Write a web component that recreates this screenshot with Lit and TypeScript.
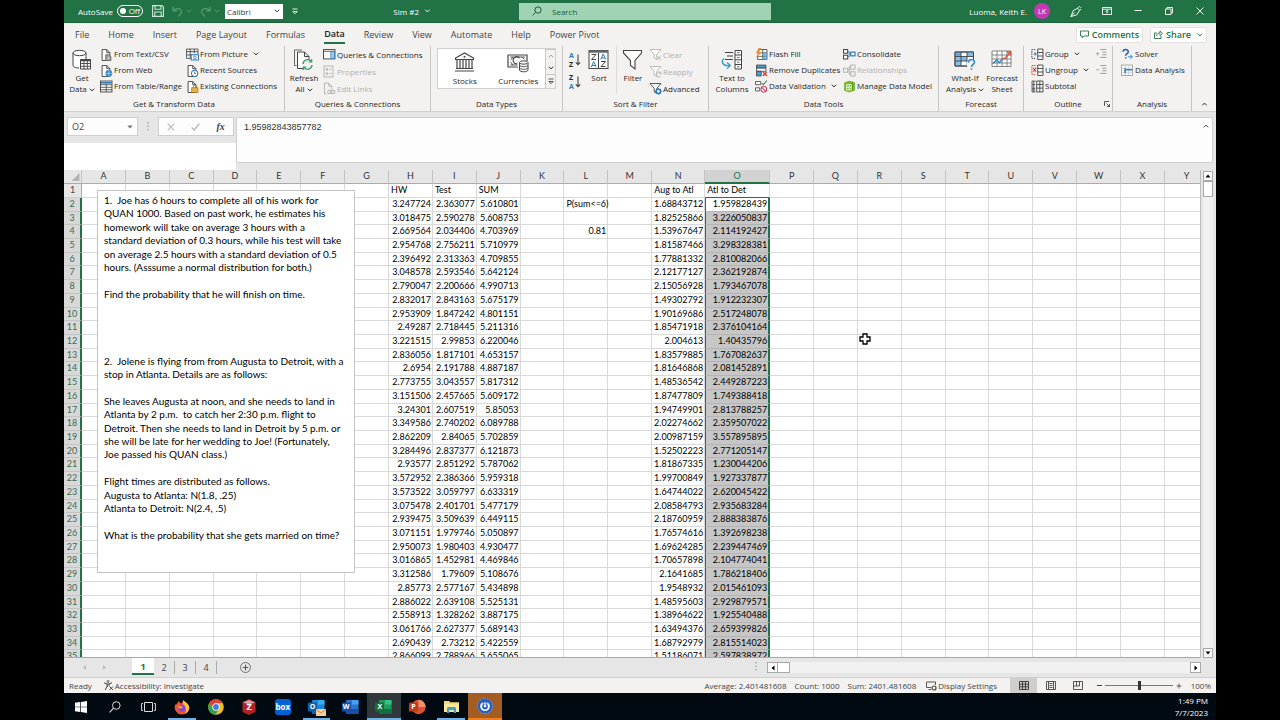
import { LitElement, html, css, svg, nothing } from "lit";
import { customElement } from "lit/decorators.js";
import { classMap } from "lit/directives/class-map.js";

const K = "#444";
const B = "#2b7cbc";
const G = "#b5b3b1";

const chevron = (w = 6) => html`<svg class="chev" width=${w} height="4" viewBox="0 0 6 4" aria-hidden="true">
  <path d="M.8.7 3 2.9 5.2.7" fill="none" stroke="currentColor" stroke-width="1" />
</svg>`;

const page = (c: string) => svg`<path d="M2 1.5h4.500l3 3V12H2z" fill="#fff" stroke=${c} stroke-width=".9"/><path d="M6.500 1.500v3h3" fill="none" stroke=${c} stroke-width=".9"/>`;

const funnel = (c: string) => svg`<path d="M1 1.500h10.500L7.500 6v5L5 9.500V6z" fill="#fff" stroke=${c} stroke-width=".9"/>`;

const small: Record<string, unknown> = {
  csv: svg`${page(K)}<path d="M5.500 6.500h3l2 1.700v4h-5z" fill="#999" stroke="#666" stroke-width=".8"/><path d="M7 9h2M7 10.500h2" stroke="#fff" stroke-width=".6"/>`,
  web: svg`${page(K)}<circle cx="8.500" cy="9" r="3.300" fill="#2b88c8"/><path d="M5.500 9h6M8.500 6v6" stroke="#cfe7f7" stroke-width=".6"/>`,
  table: svg`<rect x=".5" y="1" width="11" height="10.500" fill="#fff" stroke=${K} stroke-width=".9"/><path d="M1 2.700h10" stroke=${B} stroke-width="1.600"/><path d="M.5 4.500h11M.5 7h11M.5 9.300h11M6 4v7.500" stroke=${K} stroke-width=".8"/>`,
  picture: svg`<path d="M.5 1h11v8M.5 1v9h5M.5 3.500h11M.5 6.700h6M4 1v9M8 1v4" fill="none" stroke=${K} stroke-width=".8"/><rect x="5" y="6.500" width="7" height="5" fill="#fff" stroke=${B} stroke-width="1"/><circle cx="8.500" cy="9" r="1.300" fill="none" stroke=${B} stroke-width=".8"/>`,
  recent: svg`${page(K)}<circle cx="8.300" cy="9" r="3" fill="#fff" stroke=${B} stroke-width="1"/><path d="M8.300 7.200V9.200h1.500" fill="none" stroke=${K} stroke-width=".7"/>`,
  existing: svg`${page(K)}<rect x="5.500" y="7.500" width="6" height="4.500" fill="#e9b34a" stroke="#a3701a" stroke-width=".7"/><path d="M7 7.500V6.500a1.500 1.500 0 0 1 3 0v1" fill="none" stroke="#a3701a" stroke-width=".8"/>`,
  queries: svg`<rect x=".5" y="1.500" width="11" height="9" fill="#fff" stroke=${K} stroke-width=".9"/><path d="M.5 3.200h11" stroke=${K} stroke-width=".8"/><rect x="7.500" y="3.500" width="3.500" height="6.700" fill="#9cc8e8" stroke=${B} stroke-width=".7"/>`,
  props: svg`<rect x="1" y="1" width="8.500" height="10.500" fill="none" stroke=${G} stroke-width=".9"/><path d="M3 3.500h1.500v1.500H3zM3 7.500h1.500V9H3zM6 4.200h2M6 8.200h2" fill="none" stroke=${G} stroke-width=".9"/>`,
  links: svg`<path d="M1.500 1h4l3 3v3M1.500 1v10.500h2M5.500 1v3h3" fill="none" stroke=${G} stroke-width=".9"/><rect x="4.500" y="8" width="4" height="3" rx="1.500" fill="none" stroke=${G}/><rect x="7.500" y="8" width="4" height="3" rx="1.500" fill="none" stroke=${G}/>`,
  clear: svg`${funnel(G)}<path d="m7.500 7.500 4 4m0-4-4 4" stroke=${G} stroke-width=".9"/>`,
  reapply: svg`${funnel(G)}<path d="M11.500 8a2.500 2.500 0 1 0 0 2.500M11.500 6.500V8.300H9.700" fill="none" stroke=${G} stroke-width=".9"/>`,
  advanced: svg`${funnel(K)}<circle cx="9" cy="9" r="2.100" fill="#fff" stroke=${B} stroke-width="1.500"/><path d="M9 5.800v1M9 11.200v1M5.800 9h1M11.200 9h1M6.700 6.700l.8.800M10.500 10.500l.8.800M11.300 6.700l-.8.800M7.500 10.500l-.8.800" stroke=${B} stroke-width="1"/>`,
  flash: svg`<path d="M4.500 1.500h7v9.500h-9V7" fill="#fff" stroke=${K} stroke-width=".8"/><path d="M7.500 1.500V11M4 4.700h7.500M3 8h8.500" stroke=${K} stroke-width=".8"/><path d="M7.500 4.700h4V11h-4z" fill="#58a5db" opacity=".75"/><path d="M3.500 0 .8 5h2L1 9.500 6 4H3.800L6 0z" fill="#e8892b"/>`,
  dup: svg`<path d="M1.500 1h9v3h-9z" fill="#4b9bd4" stroke=${K} stroke-width=".8"/><path d="M1.500 4h9v3h-9z" fill="#fff" stroke=${K} stroke-width=".8"/><path d="M1.500 7h4.500v4.500H1.500z" fill="#4b9bd4" stroke=${K} stroke-width=".8"/><path d="m7.500 7.500 4 4m0-4-4 4" stroke="#d13b2e" stroke-width="1.200"/>`,
  valid: svg`<path d="M.5 1.500h5v3h-5zM.5 7.500h4v3h-4z" fill="#fff" stroke=${K} stroke-width=".8"/><path d="m6.500 3 1.500 1.500 3.500-4" fill="none" stroke="#3c8a53" stroke-width="1"/><circle cx="8.500" cy="9" r="2.700" fill="#fff" stroke="#d13b5e" stroke-width="1"/><path d="m6.600 7.200 3.800 3.700" stroke="#d13b5e" stroke-width="1"/>`,
  consol: svg`<path d="M.5 1.500h4v3.500h-4zM.5 7h4v3.500h-4z" fill="#fff" stroke=${K} stroke-width="1"/><rect x="7.500" y="4" width="4" height="3.500" fill="#fff" stroke=${B} stroke-width="1.200"/><path d="M4.500 3.500h1.500v5H4.500M6 5.700h1.500" fill="none" stroke=${B} stroke-width=".8"/>`,
  relations: svg`<path d="M.5 4h4v4h-4zM7.500 1h4v4h-4zM7.500 7.500h4v4h-4zM4.500 6H6V3h1.500M6 6v3.500h1.500" fill="none" stroke=${G} stroke-width="1"/>`,
  model: svg`<path d="m1 2.500 5-1.800 5.500 1.800v7.500L6 12 1 10z" fill="#76b82a"/><path d="M3.500 4.500h5v5h-5zM3.500 7h5M6 4.500v5" fill="none" stroke="#fff" stroke-width=".8"/><path d="M9 1.500v9" stroke="#4d8a12" stroke-width=".8"/>`,
  group: svg`<path d="M4 1.500H.8v8.500H4" fill="none" stroke=${K} stroke-width=".9" stroke-dasharray="1.500 .8"/><path d="M2.500 5.700h3M4 4.200v3" stroke=${B} stroke-width="1"/><path d="M6.500 1h5v10h-5zM6.500 4.300h5M6.500 7.700h5" fill="#fff" stroke=${K} stroke-width=".9"/>`,
  ungroup: svg`<path d="M4.500 1.500H.8v8.500h3.700" fill="none" stroke="#d13b2e" stroke-width=".9" stroke-dasharray="1.500 .8"/><path d="m2 7.500 3-4M2 3.700l3 3.800" stroke="#d13b2e" stroke-width="1"/><path d="M6.500 1h5v10h-5zM6.500 4.300h5M6.500 7.700h5" fill="#fff" stroke=${K} stroke-width=".9"/>`,
  subtotal: svg`<path d="M4.500 1H1v10.500h3.500M1 4.500h3M1 8h3M2.700 1v10.500" fill="none" stroke=${K} stroke-width=".8"/><path d="M5.500 1h6v10.500h-6zM5.500 4.300h6M5.500 7.800h6M8.500 1v10.500" fill="#fff" stroke=${K} stroke-width=".9"/><path d="M1 9.500h3" stroke=${B}/>`,
  solver: svg`<path d="M2 3.700C2 .7 7 .7 7 3.500 7 5.500 4.500 5.500 4.500 7.500M4.500 8.800v1.400" fill="none" stroke="#2b5fb0" stroke-width="1.500"/><path d="M6.500 8.500h4M9 6.800l1.800 1.700L9 10.200" fill="none" stroke="#4b9bd4" stroke-width="1"/>`,
  analysis: svg`<rect x=".5" y="1" width="10.500" height="10" fill="#fff" stroke="#999" stroke-width=".8"/><path d="M.5 4h10.500M.5 8h10.500M4 1v10M7.500 1v10" stroke="#b5c4d0" stroke-width=".7"/><path d="M4 4v5M4 5.500h7" stroke="#3d84b8" stroke-width="1.600"/>`,
  show: svg`<path d="M1 5.500h3M2.500 4v3" stroke="#999" stroke-width=".8"/><path d="M5 1.500h6M7 4h4M7 6.500h4M5 9h6" stroke="#999" stroke-width=".9"/>`,
  hide: svg`<path d="M1 5.500h3" stroke="#999" stroke-width=".8"/><path d="M5 1.500h6M7 4h4M7 6.500h4M5 9h6" stroke="#999" stroke-width=".9"/>`,
};

const big: Record<string, unknown> = {
  get: svg`<path d="M2 4v13c0 1.200 3 2 6.500 2L15 16V4z" fill="#fff"/><path d="M2 4v12.500C2 18 5 19 8 19M15 4v6" fill="none" stroke=${K}/><ellipse cx="8.500" cy="4" rx="6.500" ry="2.700" fill="#fff" stroke=${K}/><path d="M9.500 10.500h10v9.500h-10z" fill="#fff" stroke=${K}/><path d="M9.500 11.500h10" stroke=${K} stroke-width="1.500"/><path d="M9.500 14.500h10M9.500 17.300h10M13 11v9M16.300 11v9" stroke=${K} stroke-width=".9"/>`,
  refresh: svg`<path d="M3.500 16.500H1.500V1H9" fill="none" stroke="#666"/><path d="M4.500 3h7l4.500 4.500v12H4.500z" fill="#fff" stroke=${K}/><path d="M11.500 3v4.500H16" fill="none" stroke=${K}/><circle cx="14.500" cy="15.500" r="5.500" fill="#f3f2f1"/><path d="M10 15a4.500 4.500 0 0 1 8.300-2.200M19 16a4.500 4.500 0 0 1-8.300 2.200" fill="none" stroke="#3c9a63" stroke-width="1.300"/><path d="M18.700 10v3h-3M10.300 21v-3h3" fill="none" stroke="#3c9a63" stroke-width="1.200"/>`,
  sort: svg`<rect x="1" y="1.500" width="19" height="18" fill="#fff" stroke=${K}/><path d="M1 2.500h19" stroke="#666" stroke-width="2.500"/><path d="M10.500 4v15.500" stroke=${K}/><path d="M3.500 5.500H8l-4.500 5H8M13 12.500h4.500l-4.500 5h4.500" fill="none" stroke=${K}/><path d="m3.300 18 2.400-5.500L8.200 18M4 16.500h3.300M12.800 10.500l2.400-5.500 2.500 5.500M13.500 9h3.300" fill="none" stroke=${B}/>`,
  filter: svg`<path d="M1.500 1.500h18v2.500L13 11.500V20l-4.500-3.500v-5L1.500 4z" fill="#fff" stroke=${K} stroke-width="1.100"/>`,
  text: svg`<path d="M4 3.500h8M6 7h6M4 10.500h8" stroke=${K}/><path d="M14 1.500h6.500v18.500H14zM14 6h6.500M14 10.800h6.500M14 15.500h6.500" fill="#fff" stroke=${K}/><path d="M16 3.700h2.500M16 8.400h2.500M16 13.200h2.500M16 17.800h2.500" stroke=${K} stroke-width=".8"/><path d="M3.500 9.500c-4 2-2.500 8 5 7M6 13.500l3.300 3L6 19.500" fill="none" stroke="#2b9fc8" stroke-width="1.300"/>`,
  whatif: svg`<path d="M1 3h18.500v14H1z" fill="#fff" stroke=${K}/><path d="M1 3h6v4.500H1zM7 7.500h6V12H7zM13 3h6.500v4.500H13z" fill="#7fb9e6"/><path d="M1 3h6v14H1z" fill="#5ba3dc" opacity=".7"/><path d="M1 7.500h18.500M1 12h18.500M7 3v14M13 3v14M1 3h18.500v14H1z" fill="none" stroke=${K} stroke-width=".9"/><circle cx="17.500" cy="15" r="5" fill="#f3f2f1"/><path d="M14.500 13.500c0-4 6-4 6-.5 0 2.500-3 2.200-3 5M17.500 19.200v1.600" fill="none" stroke="#2b8cc8" stroke-width="1.600"/>`,
  forecast: svg`<path d="M1 2h19v15.500H1zM1 6h19M1 10h19M1 14h19M6 2v15.500M11 2v15.500M16 2v15.500" fill="#fff" stroke="#777" stroke-width=".9"/><path d="M2 14.500 5.500 11l3 2.500 3.500-4" fill="none" stroke="#2b8cc8" stroke-width="1.500"/><path d="m11.500 9.500 2.500 0 5-6M16 3h3.500v3.500" fill="none" stroke="#d8503f" stroke-width="1.400"/>`,
  stocks: svg`<path d="M1.500 7.500V6L10.500 1l9 5v1.500zM3 8v8M6 8v8M9 8v8M12 8v8M15 8v8M18 8v8M2 16.500h17M1 19h19" fill="none" stroke=${K} stroke-width="1.200"/><circle cx="10.500" cy="4.800" r="1" fill=${K}/>`,
  currency: svg`<path d="M1 3h19v6M1 3v12h10" fill="none" stroke=${K} stroke-width="1.200"/><path d="M3.500 7.500a2.500 2.500 0 0 0 2-2.500M17.500 7a2.500 2.500 0 0 1-2-2M3.500 10.500a2.500 2.500 0 0 1 2 2.500M3.300 5h14.500M3.300 13h7" fill="none" stroke=${K} stroke-width=".9"/><path d="M12.500 6.200a3.500 3.500 0 1 0-2 5.500" fill="none" stroke=${K} stroke-width="1.100"/><path d="M12.500 10.500v7.500c0 1 2 1.800 4.200 1.800S21 19 21 18v-7.500" fill="#fff" stroke=${K}/><ellipse cx="16.700" cy="10.500" rx="4.200" ry="1.700" fill="#fff" stroke=${K}/><path d="M12.500 13c0 1 2 1.700 4.200 1.700S21 14 21 13M12.500 15.600c0 1 2 1.700 4.200 1.700s4.300-.7 4.300-1.700" fill="none" stroke=${K} stroke-width=".9"/>`,
};

const sIcon = (n: string) => html`<svg class="ico" width="13" height="13" viewBox="0 0 12.500 12.500" aria-hidden="true">${small[n]}</svg>`;
const bIcon = (n: string) => html`<svg class="ico" width="22" height="22" viewBox="0 0 22 22" aria-hidden="true">${big[n]}</svg>`;

const item = (icon: string, label: string, o: { off?: boolean; drop?: boolean } = {}) => html`
  <button class="item" ?disabled=${!!o.off}>${sIcon(icon)}<span>${label}</span>${o.drop ? chevron() : nothing}</button>`;
const bigBtn = (icon: string, l1: string, l2 = "", drop = false) => html`
  <button class="big">${bIcon(icon)}<span>${l1}</span>${l2 ? html`<span>${l2}${drop ? chevron() : nothing}</span>` : nothing}</button>`;

const azIcon = (top: string, bottom: string, topBlue: boolean) => html`
  <button class="az" aria-label="Sort ${top} to ${bottom}">
    <span class="letters"><b class=${classMap({ blue: topBlue })}>${top}</b><b class=${classMap({ blue: !topBlue })}>${bottom}</b></span>
    <svg width="6" height="12" viewBox="0 0 6 12" aria-hidden="true"><path d="M3 .5v10M.8 8.300 3 10.700l2.200-2.400" fill="none" stroke="#444" stroke-width="1.100" /></svg>
  </button>`;

@customElement("excel-title-bar")
class TitleBar extends LitElement {
  static styles = css`
    :host { display: grid; grid-template-columns: 455fr 252fr 445fr; align-items: center; height: 23px; background: #217346; color: #fff; font-size: 8px; border-bottom: 1px solid #1a6139; box-sizing: border-box; }
    button { all: unset; display: flex; align-items: center; justify-content: center; }
    .left, .right { display: flex; align-items: center; }
    .left { padding-left: 14px; }
    .toggle { box-sizing: border-box; width: 26px; height: 12px; border: 1px solid #fff; border-radius: 6px; gap: 3px; margin: 0 9px 0 4px; line-height: 10px; }
    .knob { width: 6px; height: 6px; border-radius: 50%; background: #fff; }
    .dim { color: #5d9a78; gap: 3px; margin-left: 8px; }
    select { appearance: none; box-sizing: border-box; width: 58px; height: 15px; border: 0; border-radius: 0; padding: 0 2px; margin: 0; background: #fff; color: #333; font: 8px "Open Sans", sans-serif; }
    .font { display: flex; align-items: center; margin-left: 5px; }
    .font svg { margin-left: -9px; color: #333; pointer-events: none; }
    .more { margin-left: 12px; }
    .doc { gap: 5px; margin: 0 88px 0 auto; }
    .search { display: flex; align-items: center; height: 17px; background: #9fd3b3; color: #185c37; padding-left: 13px; gap: 10px; }
    input { all: unset; flex: 1; min-width: 0; font: 8px "Open Sans", sans-serif; color: #185c37; }
    input::placeholder { color: #185c37; opacity: 1; }
    .right { justify-content: flex-end; padding-right: 10px; }
    .avatar { width: 16px; height: 16px; border-radius: 50%; background: #c239b3; font-size: 7px; margin: 0 20px 0 7px; }
    .win { width: 12px; margin-left: 19px; }
    .pen { margin: 0; width: 12px; }
  `;
  render() {
    return html`
      <div class="left">
        <span>AutoSave</span>
        <button class="toggle" role="switch" aria-checked="false" aria-label="AutoSave"><i class="knob"></i>Off</button>
        <button aria-label="Save"><svg width="12" height="12" viewBox="0 0 12 12"><path d="M.6.600h9.300l1.500 1.500v9.300H.6zM3 .600v3.600h6V.600M2.800 11.400V7h6.400v4.400" fill="none" stroke="#cfe5d8" stroke-width="1.100" /></svg></button>
        <button class="dim" aria-label="Undo"><svg width="11" height="11" viewBox="0 0 11 11"><path d="M1 .8v4h4M1.200 4.600C4 1.500 10 2 9.300 6.300 9 8 7.500 9 6 10.500" fill="none" stroke="currentColor" stroke-width="1.200" /></svg>${chevron()}</button>
        <button class="dim" aria-label="Redo"><svg width="11" height="11" viewBox="0 0 11 11"><path d="M10 .8v4H6M9.800 4.600C7 1.500 1 2 1.700 6.300 2 8 3.500 9 5 10.500" fill="none" stroke="currentColor" stroke-width="1.200" /></svg>${chevron()}</button>
        <span class="font"><select aria-label="Font"><option>Calibri</option></select>${chevron()}</span>
        <button class="more" aria-label="Customize toolbar"><svg width="6" height="7" viewBox="0 0 6 7"><path d="M.5 1h5M.8 3.500 3 5.700l2.200-2.200z" fill="none" stroke="#fff" stroke-width=".9" /></svg></button>
        <button class="doc">Sim #2 ${chevron(7)}</button>
      </div>
      <label class="search">
        <svg width="10" height="10" viewBox="0 0 10 10" aria-hidden="true"><circle cx="6" cy="4" r="3.200" fill="none" stroke="currentColor" /><path d="M3.700 6.300.6 9.400" stroke="currentColor" /></svg>
        <input aria-label="Search" placeholder="Search" />
      </label>
      <div class="right">
        <span>Luoma, Keith E.</span>
        <button class="avatar" aria-label="Account">LK</button>
        <button class="win pen" aria-label="Pen"><svg width="13" height="13" viewBox="0 0 13 13"><path d="M1 12 3.500 5.500 8.300 3l2 2.200L7.500 10zM1 12l4-4.300M8.300 3l1.200-1.500M10.300 5.200 12 4M10 .600l.4 1M12.300 1.800l-1 .5" fill="none" stroke="#fff" stroke-width="1" /></svg></button>
        <button class="win" aria-label="Ribbon display options"><svg width="10" height="8" viewBox="0 0 10 8"><path d="M.5.500h9v7h-9zM.5 2.200h9M5 6.500v-3M3.500 4.700 5 3.300l1.500 1.400" fill="none" stroke="#fff" stroke-width=".9" /></svg></button>
        <button class="win" aria-label="Minimize"><svg width="8" height="8" viewBox="0 0 8 8"><path d="M.5 3.500h7" stroke="#fff" /></svg></button>
        <button class="win" aria-label="Restore"><svg width="8" height="8" viewBox="0 0 8 8"><path d="M.5 2h5.500v5.500H.5zM2 2V.500h5.500V6H6" fill="none" stroke="#fff" stroke-width=".9" /></svg></button>
        <button class="win" aria-label="Close"><svg width="8" height="8" viewBox="0 0 8 8"><path d="m.5.500 7 7m0-7-7 7" stroke="#fff" stroke-width=".9" /></svg></button>
      </div>`;
  }
}

@customElement("excel-ribbon")
class Ribbon extends LitElement {
  static styles = css`
    :host { display: block; background: #f3f2f1; color: #262626; font-size: 8px; line-height: 12px; }
    button { all: unset; box-sizing: border-box; white-space: nowrap; }
    button:disabled { color: #b1afad; }
    .tabs { display: flex; align-items: center; height: 23px; padding: 0 9px 0 11px; font-size: 9px; }
    .tab { height: 19px; line-height: 18px; margin-right: 19px; color: #444; }
    .active { font-weight: 600; color: #222; border-bottom: 2px solid #217346; }
    .actions { display: flex; gap: 7px; margin-left: auto; }
    .action { display: flex; align-items: center; gap: 3px; height: 16px; padding: 0 3px; background: #fff; border: 1px solid #e3e1df; border-radius: 2px; color: #217346; font-weight: 600; }
    .share .chev { margin-left: 3px; }
    .groups { display: grid; grid-template-columns: 221fr 146fr 132fr 146fr 230fr 85fr 89fr 79fr 24fr; height: 64px; padding-bottom: 1px; }
    .group { display: grid; grid-template-rows: 1fr 14px; border-right: 1px solid #c8c6c4; min-width: 0; margin-bottom: 2px; }
    .end { display: flex; align-items: flex-end; justify-content: center; padding-bottom: 2px; }
    .name { text-align: center; position: relative; line-height: 14px; }
    .launch { position: absolute; right: 2px; top: 4px; display: flex; }
    .body { display: grid; align-content: start; min-width: 0; }
    .get { grid-template-columns: 36px 86px 1fr; }
    .query { grid-template-columns: 38px 1fr; }
    .sortf { grid-template-columns: 24px 24px 38px 1fr; }
    .tools { grid-template-columns: 46px 88px 1fr; }
    .cast { grid-template-columns: 1fr 1fr; padding: 0 3px 0 7px; }
    .outline { grid-template-columns: 1fr 17px; padding-left: 7px; }
    .solve { padding-left: 8px; }
    .stack { display: grid; grid-auto-rows: 16px; align-content: start; }
    .roomy { grid-auto-rows: 17px; }
    .item { display: flex; align-items: center; gap: 1px; }
    .ico { flex: none; }
    .item .chev { margin-left: 4px; }
    .big { display: flex; flex-direction: column; align-items: center; line-height: 11px; padding-top: 3px; }
    .big .ico { margin-bottom: 1px; }
    .big .chev { margin-left: 2px; }
    .az { display: flex; align-items: center; justify-content: center; gap: 1px; height: 22px; }
    .letters { display: grid; font-size: 7px; line-height: 9px; }
    .blue { color: #2b7cbc; }
    .azs { padding-top: 3px; display: grid; align-content: start; }
    .filter { display: grid; align-content: start; border-left: 1px solid #dddbd9; margin-left: 5px; height: 48px; }
    .gallery { display: grid; grid-template-columns: 1fr 1fr 10px; height: 41px; margin: 2px 6px 0; background: #fff; border: 1px solid #d2d0ce; box-sizing: border-box; }
    .kind { display: flex; flex-direction: column; align-items: center; padding-top: 3px; }
    .kind .ico { margin-bottom: 1px; }
    .scroll { display: grid; grid-template-rows: repeat(3, 1fr); border-left: 1px solid #c8c6c4; }
    .scroll button { display: grid; place-items: center; background: #f3f2f1; border-bottom: 1px solid #c8c6c4; }
    .scroll button:last-child { border-bottom: 0; }
    .up { transform: scaleY(-1); }
    .scroll .up { color: #999; }
  `;
  render() {
    const tabs = ["File", "Home", "Insert", "Page Layout", "Formulas", "Data", "Review", "View", "Automate", "Help", "Power Pivot"];
    return html`
      <nav class="tabs">
        ${tabs.map((t) => html`<button class=${classMap({ tab: true, active: t === "Data" })}>${t}</button>`)}
        <div class="actions">
          <button class="action"><svg width="9" height="9" viewBox="0 0 9 9" aria-hidden="true"><path d="M.5 1h8v5H4L2.200 8V6H.5z" fill="none" stroke="currentColor" stroke-width=".9" /></svg>Comments</button>
          <button class="action share"><svg width="9" height="9" viewBox="0 0 9 9" aria-hidden="true"><path d="M3 3H.5v5.500H7V6M2.500 6C3 3.500 4.500 3 6 3V1l2.500 2.500L6 5.500V4" fill="none" stroke="currentColor" stroke-width=".9" /></svg>Share ${chevron()}</button>
        </div>
      </nav>
      <div class="groups">
        <section class="group"><div class="body get">
          ${bigBtn("get", "Get", "Data", true)}
          <div class="stack">${item("csv", "From Text/CSV")}${item("web", "From Web")}${item("table", "From Table/Range")}</div>
          <div class="stack">${item("picture", "From Picture", { drop: true })}${item("recent", "Recent Sources")}${item("existing", "Existing Connections")}</div>
        </div><div class="name">Get &amp; Transform Data</div></section>
        <section class="group"><div class="body query">
          ${bigBtn("refresh", "Refresh", "All", true)}
          <div class="stack roomy">${item("queries", "Queries & Connections")}${item("props", "Properties", { off: true })}${item("links", "Edit Links", { off: true })}</div>
        </div><div class="name">Queries &amp; Connections</div></section>
        <section class="group"><div class="gallery">
          <button class="kind">${bIcon("stocks")}<span>Stocks</span></button>
          <button class="kind">${bIcon("currency")}<span>Currencies</span></button>
          <div class="scroll"><button class="up" aria-label="Previous">${chevron()}</button><button aria-label="Next">${chevron()}</button>
            <button aria-label="More types"><svg width="6" height="7" viewBox="0 0 6 7"><path d="M.5 1h5M.8 3.500 3 5.700l2.200-2.200z" fill="none" stroke="#444" stroke-width=".9" /></svg></button></div>
        </div><div class="name">Data Types</div></section>
        <section class="group"><div class="body sortf">
          <div class="azs">${azIcon("A", "Z", true)}${azIcon("Z", "A", false)}</div>
          ${bigBtn("sort", "Sort")}
          <div class="filter">${bigBtn("filter", "Filter")}</div>
          <div class="stack roomy">${item("clear", "Clear", { off: true })}${item("reapply", "Reapply", { off: true })}${item("advanced", "Advanced")}</div>
        </div><div class="name">Sort &amp; Filter</div></section>
        <section class="group"><div class="body tools">
          ${bigBtn("text", "Text to", "Columns")}
          <div class="stack">${item("flash", "Flash Fill")}${item("dup", "Remove Duplicates")}${item("valid", "Data Validation", { drop: true })}</div>
          <div class="stack">${item("consol", "Consolidate")}${item("relations", "Relationships", { off: true })}${item("model", "Manage Data Model")}</div>
        </div><div class="name">Data Tools</div></section>
        <section class="group"><div class="body cast">
          ${bigBtn("whatif", "What-If", "Analysis", true)}${bigBtn("forecast", "Forecast", "Sheet")}
        </div><div class="name">Forecast</div></section>
        <section class="group"><div class="body outline">
          <div class="stack">${item("group", "Group", { drop: true })}${item("ungroup", "Ungroup", { drop: true })}${item("subtotal", "Subtotal")}</div>
          <div class="stack"><button class="item" aria-label="Show detail">${sIcon("show")}</button><button class="item" aria-label="Hide detail">${sIcon("hide")}</button></div>
        </div><div class="name">Outline<button class="launch" aria-label="Outline settings"><svg width="6" height="6" viewBox="0 0 6 6"><path d="M.5 5V.500H5M2.500 2.500l3 3M5.500 3v2.500H3" fill="none" stroke="#444" stroke-width=".9" /></svg></button></div></section>
        <section class="group"><div class="body solve">
          <div class="stack">${item("solver", "Solver")}${item("analysis", "Data Analysis")}</div>
        </div><div class="name">Analysis</div></section>
        <div class="end"><button class="up" aria-label="Collapse ribbon">${chevron(7)}</button></div>
      </div>`;
  }
}

@customElement("excel-formula-bar")
class FormulaBar extends LitElement {
  static styles = css`
    :host { display: grid; grid-template-columns: 172px 1fr; height: 59px; background: #e6e6e6; border-top: 1px solid #d2d0ce; box-sizing: border-box; font-size: 8px; color: #444; }
    button { all: unset; display: grid; place-items: center; }
    .left { display: grid; grid-template-rows: 31px 1fr; }
    .row { display: flex; align-items: center; padding: 0 2px 2px 3px; }
    .blank { background: #fff; }
    .box { display: flex; align-items: center; box-sizing: border-box; height: 19px; border: 1px solid #cfcfcf; background: #fdfdfd; }
    .cell { width: 71px; padding: 0 4px; }
    .cell input { all: unset; flex: 1; min-width: 0; font: 9px "Open Sans", sans-serif; }
    .dots { width: 20px; display: grid; place-items: center; }
    .fns { flex: 1; display: grid; grid-template-columns: repeat(3, 1fr); }
    .formula { display: flex; align-items: flex-start; margin: 5px 3px 7px 0; border: 1px solid #cfcfcf; background: #fdfdfd; padding: 2px 3px 0 7px; }
    textarea { all: unset; flex: 1; height: 36px; font: 9px/14px "Liberation Sans", sans-serif; color: #333; }
    .up { transform: scaleY(-1); padding: 4px 0; }
    .fx { font: italic bold 10px "Liberation Serif", serif; }
  `;
  render() {
    return html`
      <div class="left">
        <div class="row">
          <div class="box cell"><input aria-label="Name box" value="O2" /><svg width="6" height="4" viewBox="0 0 6 4" aria-hidden="true"><path d="M.3.500h5.400L3 3.500z" fill="#777" /></svg></div>
          <span class="dots"><svg width="2" height="9" viewBox="0 0 2 9"><path d="M1 0v9" stroke="#aaa" stroke-width="1.500" stroke-dasharray="1.500 2" /></svg></span>
          <div class="box fns">
            <button aria-label="Cancel"><svg width="8" height="8" viewBox="0 0 8 8"><path d="m.7.700 6.600 6.600m0-6.600L.7 7.300" stroke="#bbb" stroke-width="1.200" /></svg></button>
            <button aria-label="Enter"><svg width="9" height="8" viewBox="0 0 9 8"><path d="m.7 4.500 2.500 2.500L8.300.700" fill="none" stroke="#bbb" stroke-width="1.400" /></svg></button>
            <button class="fx" aria-label="Insert function">fx</button>
          </div>
        </div>
        <div class="blank"></div>
      </div>
      <div class="formula"><textarea aria-label="Formula" .value=${"1.95982843857782"}></textarea><button class="up" aria-label="Collapse formula bar">${chevron()}</button></div>`;
  }
}

const COLS = "ABCDEFGHIJKLMNOPQRSTUVWXY".split("");
const DATA = `3.247724 2.363077 5.610801 1.68843712 1.959828439
3.018475 2.590278 5.608753 1.82525866 3.226050837
2.669564 2.034406 4.703969 1.53967647 2.114192427
2.954768 2.756211 5.710979 1.81587466 3.298328381
2.396492 2.313363 4.709855 1.77881332 2.810082066
3.048578 2.593546 5.642124 2.12177127 2.362192874
2.790047 2.200666 4.990713 2.15056928 1.793467078
2.832017 2.843163 5.675179 1.49302792 1.912232307
2.953909 1.847242 4.801151 1.90169686 2.517248078
2.49287 2.718445 5.211316 1.85471918 2.376104164
3.221515 2.99853 6.220046 2.004613 1.40435796
2.836056 1.817101 4.653157 1.83579885 1.767082637
2.6954 2.191788 4.887187 1.81646868 2.081452891
2.773755 3.043557 5.817312 1.48536542 2.449287223
3.151506 2.457665 5.609172 1.87477809 1.749388418
3.24301 2.607519 5.85053 1.94749901 2.813788257
3.349586 2.740202 6.089788 2.02274662 2.359507022
2.862209 2.84065 5.702859 2.00987159 3.557895895
3.284496 2.837377 6.121873 1.52502223 2.771205147
2.93577 2.851292 5.787062 1.81867335 1.230044206
3.572952 2.386366 5.959318 1.99700849 1.927337877
3.573522 3.059797 6.633319 1.64744022 2.620045422
3.075478 2.401701 5.477179 2.08584793 2.935683284
2.939475 3.509639 6.449115 2.18760959 2.888383876
3.071151 1.979746 5.050897 1.76574616 1.392698238
2.950073 1.980403 4.930477 1.69624285 2.239447469
3.016865 1.452981 4.469846 1.70657898 2.104774041
3.312586 1.79609 5.108676 2.1641685 1.786218406
2.85773 2.577167 5.434898 1.9548932 2.015461093
2.886022 2.639108 5.525131 1.48595603 2.929879571
2.558913 1.328262 3.887175 1.38964622 1.925540488
3.061766 2.627377 5.689143 1.63494376 2.659399826
2.690439 2.73212 5.422559 1.68792979 2.815514023
2.866099 2.788966 5.655065 1.51186071 2.597838972`.split("\n").map((l) => l.split(" "));
const DATA_COLS = ["H", "I", "J", "N", "O"];

function cellValue(col: string, row: number): string {
  if (row === 1) return ({ H: "HW", I: "Test", J: "SUM", N: "Aug to Atl", O: "Atl to Det" } as Record<string, string>)[col] ?? "";
  if (col === "L") return row === 2 ? "P(sum<=6)" : row === 4 ? "0.81" : "";
  const k = DATA_COLS.indexOf(col);
  return k < 0 ? "" : DATA[row - 2][k];
}

const NOTE = `1.  Joe has 6 hours to complete all of his work for
QUAN 1000. Based on past work, he estimates his
homework will take on average 3 hours with a
standard deviation of 0.3 hours, while his test will take
on average 2.5 hours with a standard deviation of 0.5
hours. (Asssume a normal distribution for both.)

Find the probability that he will finish on time.




2.  Jolene is flying from from Augusta to Detroit, with a
stop in Atlanta. Details are as follows:

She leaves Augusta at noon, and she needs to land in
Atlanta by 2 p.m.  to catch her 2:30 p.m. flight to
Detroit. Then she needs to land in Detroit by 5 p.m. or
she will be late for her wedding to Joe! (Fortunately,
Joe passed his QUAN class.)

Flight times are distributed as follows.
Augusta to Atlanta: N(1.8, .25)
Atlanta to Detroit: N(2.4, .5)

What is the probability that she gets married on time?`;

@customElement("excel-sheet")
class Sheet extends LitElement {
  static styles = css`
    :host { display: grid; grid-template-columns: 1fr 15px; min-height: 0; flex: 1; background: #e6e6e6; font-family: Lato, sans-serif; }
    .view { position: relative; overflow: hidden; border-right: 1px solid #bdbdbd; border-bottom: 1px solid #a8a8a8; background: #fff; }
    table { table-layout: fixed; width: calc(100% + 9px); border-collapse: separate; border-spacing: 0; font-size: 9px; line-height: 12px; color: #000; }
    .c-head { width: 18px; }
    .c-n { width: 53px; }
    .c-o { width: 65px; }
    th, td { box-sizing: border-box; padding: 0; height: 14px; border-right: 1px solid #d9d9d9; border-bottom: 1px solid #d9d9d9; white-space: nowrap; font-weight: 400; vertical-align: top; }
    tbody tr:nth-child(7n + 3) > *, tbody tr:nth-child(7n + 6) > * { height: 13px; }
    td { text-align: right; padding-right: 1px; }
    .txt { text-align: left; padding-left: 2px; }
    thead th { background: #e6e6e6; color: #333; border-right-color: #c4c4c4; border-bottom-color: #ababab; }
    thead .sel { background: #d2d2d2; color: #217346; border-bottom: 2px solid #217346; }
    .corner svg { display: block; margin: 2px 0 0 auto; }
    tbody th { background: #e6e6e6; color: #444; border-right-color: #ababab; border-bottom-color: #d0d0d0; }
    tbody th.sel { background: #d8d8d8; color: #3c6b50; border-right: 2px solid #217346; border-bottom-color: #c4c4c4; }
    td.range { background: #c6c6c6; border-right: 2px solid #217346; border-left: 1px solid #217346; border-bottom-color: #b4b4b4; }
    td.cursor { background: #fff; }
    td.above { border-bottom-color: #217346; }
    .note { position: absolute; left: 33px; top: 20px; width: 258px; height: 383px; box-sizing: border-box; margin: 0; padding: 3px 6px; background: #fff; border: 1px solid #c4c4c4; font: 10px Lato, sans-serif; display: grid; grid-template-rows: repeat(28, 1fr); color: #000; white-space: pre; }
    .pointer { position: absolute; left: 795px; top: 163px; }
    .vbar { display: flex; flex-direction: column; padding: 1px 3px 0 2px; }
    .arrow { all: unset; box-sizing: border-box; height: 10px; border: 1px solid #a8a8a8; background: #fff; display: grid; place-items: center; }
    .track { flex: 1; background: #f1f1f1; }
    .thumb { height: 16px; box-sizing: border-box; border: 1px solid #a8a8a8; background: #fff; }
  `;
  render() {
    return html`
      <div class="view">
        <table>
          <colgroup><col class="c-head" />${COLS.map((c) => html`<col class=${c === "N" ? "c-n" : c === "O" ? "c-o" : ""} />`)}</colgroup>
          <thead><tr><th class="corner"><svg width="10" height="10" viewBox="0 0 10 10" aria-hidden="true"><path d="M8.500 1v8h-8z" fill="#b4b4b4" /></svg></th>
            ${COLS.map((c) => html`<th scope="col" class=${classMap({ sel: c === "O" })}>${c}</th>`)}</tr></thead>
          <tbody>${Array.from({ length: 35 }, (_, i) => i + 1).map((r) => html`<tr><th scope="row" class=${classMap({ sel: r > 1 })}>${r}</th>${COLS.map((c) => {
            const v = cellValue(c, r);
            return html`<td class=${classMap({ txt: /^[A-Z]/.test(v), range: c === "O" && r > 1, cursor: c === "O" && r === 2, above: c === "O" && r === 1 })}>${v}</td>`;
          })}</tr>`)}</tbody>
        </table>
        <div class="note">${NOTE.split("\n").map((l) => html`<span>${l}</span>`)}</div>
        <svg class="pointer" width="12" height="12" viewBox="0 0 12 12" aria-hidden="true"><path d="M4 1h4v3h3v4H8v3H4V8H1V4h3z" fill="#fff" stroke="#000" stroke-width="1.300" /></svg>
      </div>
      <div class="vbar">
        <button class="arrow" aria-label="Scroll up"><svg width="6" height="4" viewBox="0 0 6 4"><path d="M.5 3.500h5L3 .500z" /></svg></button>
        <div class="thumb"></div><div class="track"></div>
        <button class="arrow" aria-label="Scroll down"><svg width="6" height="4" viewBox="0 0 6 4"><path d="M.5.500h5L3 3.500z" /></svg></button>
      </div>`;
  }
}

@customElement("excel-footer")
class Footer extends LitElement {
  static styles = css`
    :host { display: block; font-size: 8px; color: #444; }
    button { all: unset; box-sizing: border-box; }
    .sheets { display: flex; align-items: stretch; height: 19px; background: #e6e6e6; font-size: 9px; }
    .nav { display: flex; gap: 17px; width: 68px; padding-left: 19px; box-sizing: border-box; align-items: center; color: #bbb; }
    .tab { width: 21px; text-align: center; height: 13px; line-height: 13px; margin-top: 3px; border-right: 1px solid #ababab; }
    .active { width: 22px; height: 17px; line-height: 18px; margin-top: 0; background: #fff; border: 0; border-bottom: 2px solid #217346; color: #217346; font-weight: 700; }
    .add { display: grid; place-items: center; padding-left: 22px; }
    .hbar { display: flex; align-items: center; margin-left: auto; width: 40%; padding-right: 15px; box-sizing: border-box; }
    .dots { width: 12px; flex: none; }
    .arrow { width: 11px; height: 11px; border: 1px solid #a8a8a8; background: #fff; display: grid; place-items: center; flex: none; }
    .thumb { width: 12px; height: 11px; border: 1px solid #a8a8a8; border-left: 0; background: #fff; box-sizing: border-box; }
    .track { flex: 1; height: 11px; background: #f1f1f1; }
    .status { display: flex; align-items: center; height: 16px; background: #f3f2f1; border-top: 1px solid #d0d0d0; box-sizing: border-box; padding: 0 5px; white-space: nowrap; }
    .acc, .disp { display: flex; align-items: center; gap: 1px; }
    .acc { margin-left: 11px; }
    .stats { display: flex; gap: 8px; margin-left: auto; }
    .disp { margin: 0 13px 0 10px; }
    .view { width: 27px; height: 15px; display: grid; place-items: center; }
    .on { background: #d0cecc; }
    .zoom { display: flex; align-items: center; gap: 3px; margin-left: 6px; }
    input { appearance: none; width: 68px; height: 11px; margin: 0; background: linear-gradient(#777, #777) center / 100% 1px no-repeat; }
    input::-webkit-slider-thumb { appearance: none; width: 3px; height: 9px; background: #333; }
    .pct { width: 26px; text-align: right; }
  `;
  render() {
    return html`
      <div class="sheets">
        <div class="nav"><svg width="3" height="5" viewBox="0 0 3 5"><path d="M3 0v5L0 2.500z" fill="currentColor" /></svg><svg width="3" height="5" viewBox="0 0 3 5"><path d="M0 0v5l3-2.500z" fill="currentColor" /></svg></div>
        <button class="tab active">1</button><button class="tab">2</button><button class="tab">3</button><button class="tab">4</button>
        <button class="add" aria-label="New sheet"><svg width="13" height="13" viewBox="0 0 13 13"><circle cx="6.500" cy="6.500" r="5" fill="none" stroke="#666" stroke-width=".9" /><path d="M6.500 3.800v5.400M3.800 6.500h5.400" stroke="#555" stroke-width="1.100" /></svg></button>
        <div class="hbar"><span class="dots"><svg width="2" height="9" viewBox="0 0 2 9"><path d="M1 0v9" stroke="#aaa" stroke-width="1.500" stroke-dasharray="1.500 2" /></svg></span>
          <button class="arrow" aria-label="Scroll left"><svg width="4" height="6" viewBox="0 0 4 6"><path d="M3.500.500v5L.5 3z" /></svg></button><div class="thumb"></div><div class="track"></div>
          <button class="arrow" aria-label="Scroll right"><svg width="4" height="6" viewBox="0 0 4 6"><path d="M.5.500v5l3-2.500z" /></svg></button></div>
      </div>
      <div class="status">
        <span>Ready</span>
        <button class="acc"><svg width="11" height="11" viewBox="0 0 11 11" aria-hidden="true"><circle cx="5" cy="1.500" r="1" fill="none" stroke="#444" stroke-width=".8" /><path d="M1 2.800 4 4v2.500L2.200 10M9 2.800 6 4v2M4 4h2M4 7l1-1" fill="none" stroke="#444" stroke-width="1" /><path d="m6.500 6.500 3.500 3.500m0-3.500L6.500 10" stroke="#444" /></svg>Accessibility: Investigate</button>
        <div class="stats"><span>Average: 2.401481608</span><span>Count: 1000</span><span>Sum: 2401.481608</span></div>
        <button class="disp"><svg width="11" height="10" viewBox="0 0 11 10" aria-hidden="true"><path d="M5 6.500H.5V1h9v3M2.500 8.500H5" fill="none" stroke="#444" stroke-width=".9" /><circle cx="8" cy="7" r="2" fill="none" stroke="#444" stroke-width="1.200" /></svg>Display Settings</button>
        <button class="view on" aria-label="Normal view"><svg width="10" height="9" viewBox="0 0 10 9"><path d="M.5.500h9v8h-9zM.5 3.200h9M.5 5.800h9M3.500.500v8M6.500.500v8" fill="none" stroke="#333" stroke-width=".9" /></svg></button>
        <button class="view" aria-label="Page layout view"><svg width="10" height="9" viewBox="0 0 10 9"><path d="M.5.500h9v8h-9zM2.500.500v8M7.500.500v8M3.500 2.500h3M3.500 4.500h3M3.500 6.500h3" fill="none" stroke="#444" stroke-width=".9" /></svg></button>
        <button class="view" aria-label="Page break preview"><svg width="10" height="9" viewBox="0 0 10 9"><path d="M.5.500h9v8h-9zM3.500.500v4.500M6.500.500v4.500M.5 5h6" fill="none" stroke="#444" stroke-width=".9" /></svg></button>
        <div class="zoom"><svg width="5" height="5" viewBox="0 0 5 5" aria-hidden="true"><path d="M0 2.500h5" stroke="#444" /></svg><input type="range" aria-label="Zoom" min="0" max="200" value="100" /><svg width="6" height="6" viewBox="0 0 6 6" aria-hidden="true"><path d="M.5 3h5M3 .500v5" stroke="#555" stroke-width=".9" /></svg><span class="pct">100%</span></div>
      </div>`;
  }
}

const office = (letter: string, dark: string, mid: string, light: string) => html`<span class="office"><svg width="17" height="16" viewBox="0 0 17 16" aria-hidden="true"><rect x="4" y="1" width="12.500" height="14" rx="1" fill=${mid} /><path d="M10 1h5.500a1 1 0 0 1 1 1v3.500H10z" fill=${light} /><path d="M4 10h12.500v4a1 1 0 0 1-1 1H5a1 1 0 0 1-1-1z" fill=${dark} /><rect y="3.500" width="9" height="9" rx="1" fill=${dark} /></svg><b>${letter}</b></span>`;

const apps: { name: string; state?: string; art: unknown }[] = [
  { name: "Start", art: html`<svg width="12" height="12" viewBox="0 0 12 12"><path d="M0 1.700 5.300 1v4.700H0zM6 .900 12 0v5.700H6zM0 6.300h5.300V11L0 10.300zM6 6.300h6V12l-6-.9z" fill="#fff" /></svg>` },
  { name: "Search", art: html`<svg width="12" height="12" viewBox="0 0 12 12"><circle cx="7.300" cy="4.500" r="3.800" fill="none" stroke="#ddd" /><path d="M4.600 7.200.600 11.400" stroke="#ddd" stroke-width="1.100" /></svg>` },
  { name: "Task view", art: html`<svg width="15" height="12" viewBox="0 0 15 12"><path d="M3.500 1.500h8v9h-8zM2 2.500H.600v7H2M13 2.500h1.400v7H13" fill="none" stroke="#ddd" /></svg>` },
  { name: "Firefox", state: "run", art: html`<svg width="16" height="16" viewBox="0 0 16 16"><path d="M8 15.500A7 7 0 0 1 2 4.500l1 1.200C3 4 4 2.500 5 2c0 1.500 1.500 2 2.500 2.500L9.500 1c.5 2 5.500 3 5.800 8A7.200 7.200 0 0 1 8 15.500z" fill="#f5532d" /><path d="M9.500 1c.5 2 5.800 3 5.800 8-.3 3-2.500 5-4.500 6 2-3 1.200-5 .2-7-1-1.500-2.800-3-1.500-7z" fill="#ffc62e" /><circle cx="7.800" cy="9.200" r="3.600" fill="#8a45d6" /><path d="M4 7c2-.8 4 0 5 1.500-1.500.5-2 1.500-4 1" fill="#ff9a2d" /></svg>` },
  { name: "Chrome", art: html`<svg width="16" height="16" viewBox="0 0 16 16"><circle cx="8" cy="8" r="7.800" fill="#f2bf26" /><path d="M1.300 4A7.800 7.800 0 0 1 14.700 4H8L5 9.500z" fill="#e0412f" /><path d="M1.300 4A7.800 7.800 0 0 0 7.500 15.800L11 10H5z" fill="#30a350" /><circle cx="8" cy="8" r="3.700" fill="#fff" /><circle cx="8" cy="8" r="2.900" fill="#3f7ee8" /></svg>` },
  { name: "Zotero", art: html`<span class="tile z"><svg width="14" height="16" viewBox="0 0 14 16"><path d="M7 0l6.500 3v10L7 16 .500 13V3z" fill="#b32025" /><path d="M1 3.500 7 1l6 2.500-6 2z" fill="#ddd" opacity=".7" /></svg><b>Z</b></span>` },
  { name: "Box", art: html`<span class="tile box"><b>box</b></span>` },
  { name: "Outlook", state: "run", art: html`<span class="mail">${office("O", "#0f5fb0", "#1c86d9", "#35b0ee")}<svg width="10" height="7" viewBox="0 0 10 7"><path d="M0 0h10v7H0z" fill="#f5cf9a" /><path d="m0 .500 5 3.500 5-3.500" fill="none" stroke="#b98243" stroke-width=".8" /></svg></span>` },
  { name: "Word", art: office("W", "#1a4fa8", "#2f73d0", "#45a2ee") },
  { name: "Excel", state: "run current", art: office("X", "#11703c", "#1f9c5c", "#36c483") },
  { name: "PowerPoint", art: html`<span class="office"><svg width="17" height="16" viewBox="0 0 17 16"><circle cx="9.500" cy="8" r="7.200" fill="#d9522f" /><path d="M9.500.800a7.200 7.200 0 0 1 7.200 7.200H9.500z" fill="#f4906f" /><rect y="3.500" width="9" height="9" rx="1" fill="#c13b1a" /></svg><b>P</b></span>` },
  { name: "File Explorer", state: "run", art: html`<svg width="15" height="13" viewBox="0 0 15 13"><path d="M0 1h5l1.200 1.200H15V12H0z" fill="#f4d777" /><path d="M0 4h15v8H0z" fill="#fbe69b" /><path d="M3 13V8.500C3 7.500 3.500 7 4.500 7h6c1 0 1.500.500 1.500 1.500V13H9.800V10H5.200v3z" fill="#3ea3c4" /></svg>` },
  { name: "Recorder", state: "alert", art: html`<svg width="18" height="18" viewBox="0 0 18 18"><circle cx="9" cy="9" r="7.600" fill="#2a5fc0" stroke="#6d9be8" stroke-dasharray="1.500 1" stroke-width="1" /><circle cx="9" cy="9.300" r="4.800" fill="#fff" /><circle cx="9" cy="9.500" r="2.900" fill="#2a5fc0" /><path d="M6.500 3.500h5v3h-5z" fill="#2a5fc0" /><circle cx="9" cy="9" r="1.300" fill="#fff" /><path d="M9 8.500V5" stroke="#fff" /></svg>` },
];

@customElement("win-taskbar")
class Taskbar extends LitElement {
  static styles = css`
    :host { display: flex; justify-content: space-between; height: 27px; background: #010a10; color: #fff; font-size: 8px; }
    .apps { display: flex; width: 38%; }
    button { all: unset; flex: 1; display: grid; place-items: center; box-sizing: border-box; position: relative; }
    .run::after { content: ""; position: absolute; left: 3px; right: 3px; bottom: 0; height: 2px; background: #6fb2e4; }
    .current { background: #31383c; }
    .current::after { left: 0; right: 0; }
    .alert { background: #a35c22; border-bottom: 2px solid #f07f1e; }
    .office, .tile, .mail { position: relative; display: grid; }
    .office b { position: absolute; left: 0; top: 4px; width: 9px; text-align: center; font: bold 7px/8px "Open Sans", sans-serif; }
    .mail > svg { position: absolute; right: -1px; bottom: -1px; }
    .tile { place-items: center; }
    .z b { position: absolute; font-size: 9px; }
    .box { width: 16px; height: 16px; border-radius: 3px; background: #0061d5; font-size: 8px; line-height: 14px; }
    .clock { display: grid; align-content: center; justify-items: end; line-height: 12px; padding-right: 8px; }
  `;
  render() {
    return html`
      <div class="apps">${apps.map((a) => html`<button class=${a.state ?? ""} aria-label=${a.name}>${a.art}</button>`)}</div>
      <div class="clock"><span>1:49 PM</span><span>7/7/2023</span></div>`;
  }
}

@customElement("app-root")
class AppRoot extends LitElement {
  static styles = css`
    :host { display: flex; flex-direction: column; height: 100vh; box-sizing: border-box; padding: 0 5%; background: #000; font-family: "Open Sans", sans-serif; overflow: hidden; }
  `;
  render() {
    return html`<excel-title-bar></excel-title-bar><excel-ribbon></excel-ribbon><excel-formula-bar></excel-formula-bar><excel-sheet></excel-sheet><excel-footer></excel-footer><win-taskbar></win-taskbar>`;
  }
}
